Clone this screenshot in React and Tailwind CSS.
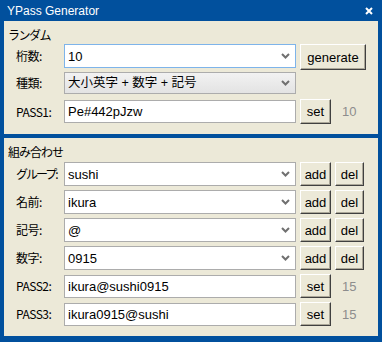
import React from "react";

const JP = { fontFamily: '"Noto Sans CJK JP", sans-serif' };
const UI = { fontFamily: '"Liberation Sans", "Noto Sans CJK JP", sans-serif' };

const Chevron = () => (
  <svg width="9" height="6" viewBox="0 0 9 6" className="shrink-0">
    <path d="M1 1 L4.5 4.5 L8 1" fill="none" stroke="#707070" strokeWidth="2" />
  </svg>
);

const Label = ({ children, tight }) => (
  <div
    className={`w-[48px] shrink-0 whitespace-nowrap text-[12px] text-black leading-none ${tight ? "tracking-[-2px]" : "tracking-[-0.5px]"}`}
    style={JP}
  >
    {children}
  </div>
);

const Combo = ({ value, focus }) => (
  <div
    className={`w-[232px] h-[24px] shrink-0 bg-white border flex items-center pl-[3px] pr-[5px] ${focus ? "border-[#7eb4ea]" : "border-[#acacac]"}`}
  >
    <span className="flex-1 text-[13px] text-black leading-none" style={UI}>{value}</span>
    <Chevron />
  </div>
);

const TextBox = ({ value }) => (
  <div className="w-[232px] h-[23px] shrink-0 bg-white border border-[#acacac] flex items-center pl-[3px]">
    <span className="text-[13px] text-black leading-none" style={UI}>{value}</span>
  </div>
);

const Btn = ({ children, w, h = "h-[24px]" }) => (
  <div
    className={`${w} ${h} ml-[4px] shrink-0 bg-[#ece9d8] border border-t-white border-l-white border-r-[#404040] border-b-[#404040] shadow-[inset_-1px_-1px_0_#aca899] flex items-center justify-center text-[13px] text-black leading-none`}
    style={UI}
  >
    {children}
  </div>
);

const Count = ({ n }) => (
  <span className="ml-[11px] text-[13px] text-[#8d8d8d] leading-none" style={UI}>{n}</span>
);

export default function App() {
  return (
    <div className="w-[382px] h-[342px] bg-[#01509d] flex flex-col px-[4px] pb-[6px] overflow-hidden">
      {/* title bar */}
      <div className="h-[21px] shrink-0 flex items-center justify-between -mx-[4px] pl-[7px] pr-[9px]">
        <span className="text-[12px] text-white leading-none" style={UI}>YPass Generator</span>
        <svg width="8" height="8" viewBox="0 0 8 8">
          <path d="M1 1 L7 7 M7 1 L1 7" stroke="white" strokeWidth="2" />
        </svg>
      </div>

      {/* random */}
      <div className="h-[113px] shrink-0 bg-[#ece9d8] flex flex-col">
        <div className="h-[23px] pt-[6px] pl-[4px] text-[12px] leading-[15px] tracking-[-1.5px] text-black" style={JP}>ランダム</div>
        <div className="h-[26px] flex items-start pl-[12px]">
          <div className="h-[24px] flex items-center"><Label>桁数:</Label></div>
          <Combo value="10" focus />
          <Btn w="w-[66px]" h="h-[26px]">generate</Btn>
        </div>
        <div className="mt-[2px] h-[22px] flex items-center pl-[12px]">
          <Label>種類:</Label>
          <div className="w-[232px] h-[22px] border border-[#acacac] bg-gradient-to-b from-[#f2f2f2] to-[#e3e3e3] flex items-center pl-[3px] pr-[5px]">
            <span className="flex-1 text-[12.5px] text-black leading-none" style={UI}>大小英字 + 数字 + 記号</span>
            <Chevron />
          </div>
        </div>
        <div className="mt-[5px] h-[25px] flex items-center pl-[12px]">
          <Label>PASS1:</Label>
          <TextBox value="Pe#442pJzw" />
          <Btn w="w-[31px]" h="h-[25px]">set</Btn>
          <Count n="10" />
        </div>
      </div>

      {/* combination */}
      <div className="mt-[4px] flex-1 bg-[#ece9d8] flex flex-col">
        <div className="h-[24px] pt-[6px] pl-[4px] text-[12px] leading-[15px] tracking-[-1px] text-black" style={JP}>組み合わせ</div>
        <div className="flex flex-col gap-[4px] pl-[12px]">
          {[
            ["グループ:", "sushi", true],
            ["名前:", "ikura"],
            ["記号:", "@"],
            ["数字:", "0915"],
          ].map(([l, v, t]) => (
            <div key={l} className="h-[24px] flex items-center">
              <Label tight={t}>{l}</Label>
              <Combo value={v} />
              <Btn w="w-[31px]">add</Btn>
              <Btn w="w-[29px]">del</Btn>
            </div>
          ))}
          {[
            ["PASS2:", "ikura@sushi0915"],
            ["PASS3:", "ikura0915@sushi"],
          ].map(([l, v]) => (
            <div key={l} className="h-[24px] flex items-center">
              <Label>{l}</Label>
              <TextBox value={v} />
              <Btn w="w-[31px]">set</Btn>
              <Count n="15" />
            </div>
          ))}
        </div>
      </div>
    </div>
  );
}
